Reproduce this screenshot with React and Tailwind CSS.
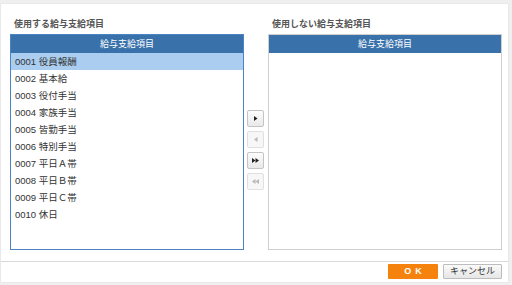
import React from "react";

const items = [
  "0001 役員報酬",
  "0002 基本給",
  "0003 役付手当",
  "0004 家族手当",
  "0005 皆勤手当",
  "0006 特別手当",
  "0007 平日Ａ帯",
  "0008 平日Ｂ帯",
  "0009 平日Ｃ帯",
  "0010 休日",
];

const font = { fontFamily: '"Liberation Sans", "Noto Sans CJK JP", sans-serif' };

const Tri = ({ dir, double, color }) => {
  const one = dir === "r" ? "M0 0 L3.5 2.5 L0 5 Z" : "M3.5 0 L0 2.5 L3.5 5 Z";
  return (
    <svg width={double ? 7 : 4} height="5" viewBox={`0 0 ${double ? 7 : 4} 5`}>
      <path d={one} fill={color} />
      {double && <path d={one} transform="translate(3.5 0)" fill={color} />}
    </svg>
  );
};

const MoveButton = ({ dir, double, disabled }) => (
  <button
    className={`w-[17px] h-[17px] flex items-center justify-center rounded-[2px] border ${
      disabled
        ? "border-[#e0e0e0] bg-[#f7f7f7]"
        : "border-[#c4c4c4] bg-gradient-to-b from-[#fdfdfd] to-[#e9e9e9]"
    }`}
  >
    <Tri dir={dir} double={double} color={disabled ? "#b8b8b8" : "#222"} />
  </button>
);

const ListBox = ({ active, rows }) => (
  <div
    className={`w-[234px] h-[216px] flex flex-col bg-white border ${
      active ? "border-[#4d82c3]" : "border-[#cfcfcf]"
    }`}
  >
    <div className="h-[18px] shrink-0 bg-[#3971aa] text-white text-[9px] leading-[18px] text-center">
      給与支給項目
    </div>
    <div className="flex-1">
      {rows.map((r, i) => (
        <div
          key={r}
          className={`h-[17px] leading-[17px] pl-[4px] text-[9.5px] text-[#333] ${
            i === 0 ? "bg-[#aacdf0]" : ""
          }`}
        >
          {r}
        </div>
      ))}
    </div>
  </div>
);

export default function App() {
  return (
    <div className="w-[512px] h-[285px] bg-[#efefef] pt-[4px] pl-[1px] pr-[4px] pb-[3px]" style={font}>
      <div className="h-full bg-white flex flex-col shadow-[0_0_1px_rgba(0,0,0,0.15)]">
        <div className="flex-1 pt-[13px] pl-[9px] flex">
          <div className="flex flex-col">
            <div className="h-[14px] leading-[14px] mb-[3px] pl-[4px] text-[9px] font-bold text-[#555]">
              使用する給与支給項目
            </div>
            <ListBox active rows={items} />
          </div>
          <div className="w-[24px] pt-[93px] pl-[3px] flex flex-col gap-[4px]">
            <MoveButton dir="r" />
            <MoveButton dir="l" disabled />
            <MoveButton dir="r" double />
            <MoveButton dir="l" double disabled />
          </div>
          <div className="flex flex-col">
            <div className="h-[14px] leading-[14px] mb-[3px] pl-[4px] text-[9px] font-bold text-[#555]">
              使用しない給与支給項目
            </div>
            <ListBox rows={[]} />
          </div>
        </div>
        <div className="h-[21px] border-t border-[#d9d9d9] flex justify-end items-start pt-[2px] pr-[6px] gap-[5px]">
          <button className="w-[50px] h-[15px] bg-[#f5820d] text-white text-[9px] font-bold tracking-[4px] pl-[4px] leading-[15px] rounded-[1px]">
            OK
          </button>
          <button className="w-[59px] h-[15px] border border-[#bdbdbd] bg-gradient-to-b from-[#fafafa] to-[#e6e6e6] text-[#333] text-[9px] leading-[13px] rounded-[1px]">
            キャンセル
          </button>
        </div>
      </div>
    </div>
  );
}
